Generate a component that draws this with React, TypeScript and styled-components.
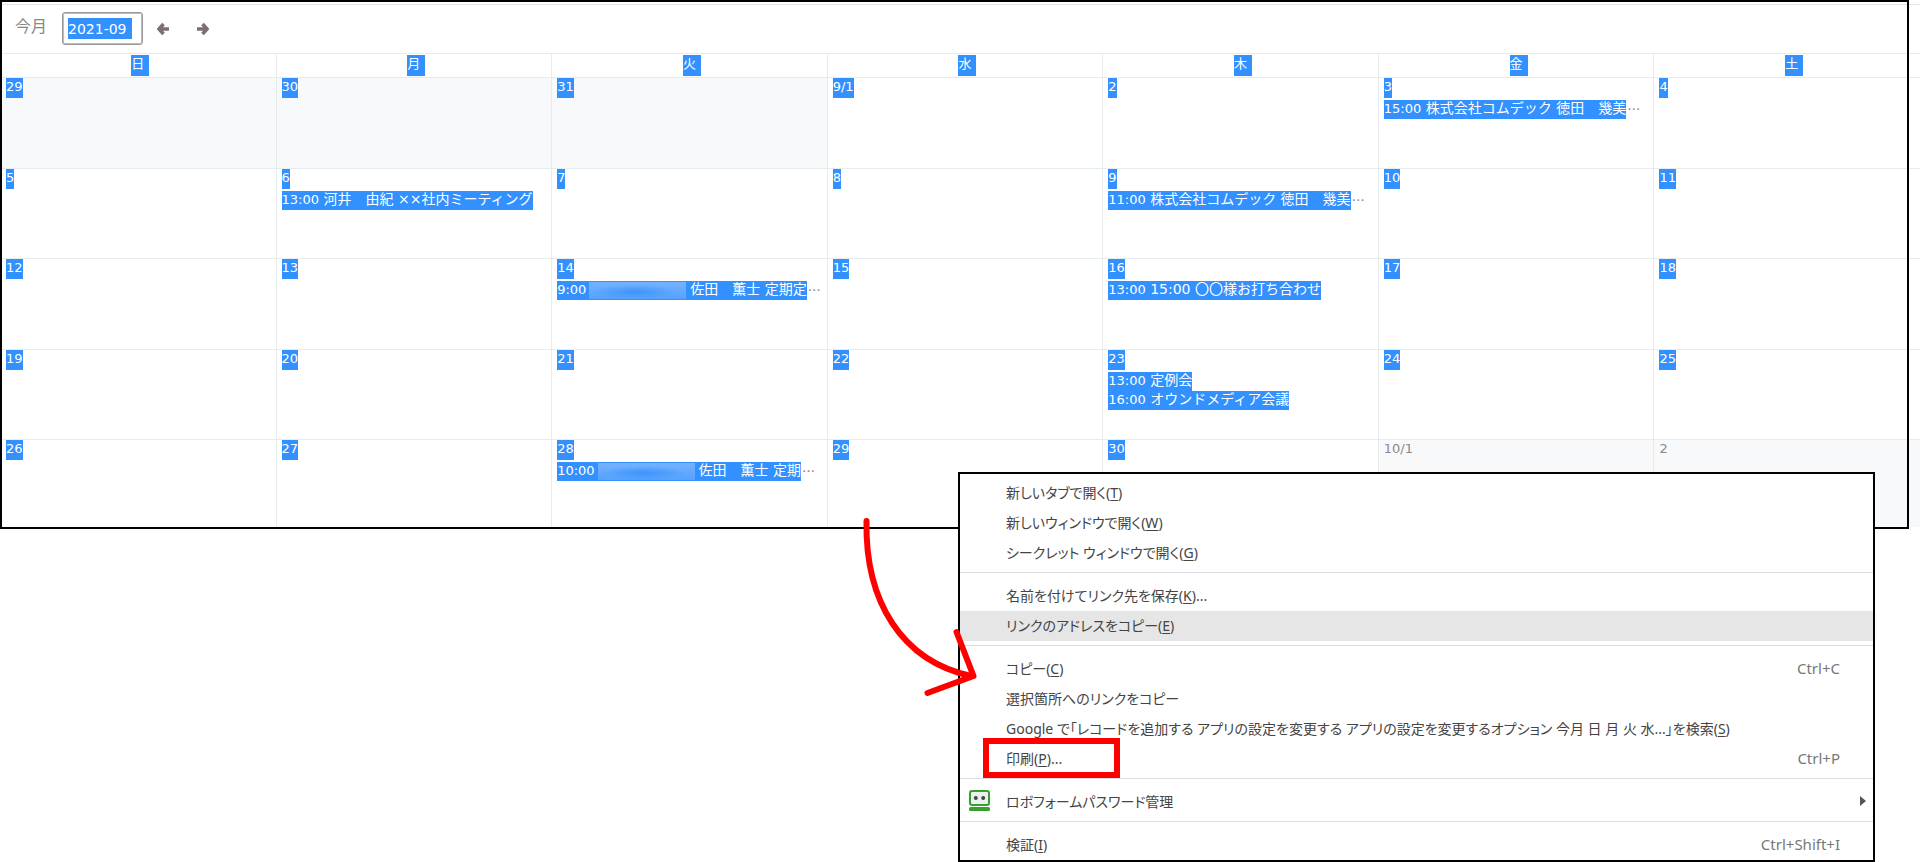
import React from 'react';
import styled, { createGlobalStyle } from 'styled-components';

const SELECT_BLUE = '#3290ff';
const LINE = '#e6ebed';

const GlobalStyle = createGlobalStyle`
  * { box-sizing: border-box; }
  body {
    margin: 0;
    background: #fff;
    color: #888;
    font-family: "DejaVu Sans", "Noto Sans CJK JP", sans-serif;
    font-size: 13px;
    overflow-x: hidden;
  }
  button, input { font: inherit; color: inherit; border: 0; background: none; padding: 0; }
`;

const Page = styled.main`
  position: relative;
  overflow-x: hidden;
  min-height: 862px;
`;

const Calendar = styled.section`
  position: relative;
  overflow: hidden;
  padding-bottom: 2px;
`;

const Frame = styled.div`
  position: absolute;
  inset: 0 11px 0 0;
  border: 2px solid #000;
  pointer-events: none;
`;

const Toolbar = styled.header`
  display: flex;
  align-items: center;
  height: 49px;
  margin-top: 4px;
  padding: 0 0 1px 15px;
  border-top: 1px solid #e4e4e4;
`;

const TodayButton = styled.button`
  font-size: 16px;
  line-height: 20px;
  margin-top: -4px;
`;

const MonthBox = styled.label`
  display: flex;
  align-items: center;
  height: 33px;
  width: 81px;
  margin: 0 14px 0 15px;
  padding: 0 5px;
  border: 1px solid #999;
  border-radius: 3px;
  box-shadow: inset 0 0 0 1px #bbb;
`;

const MonthInput = styled.input`
  width: 64px;
  height: 21px;
  background: ${SELECT_BLUE};
  color: #fff;
  font-size: 14px;
`;

const ArrowButton = styled.button`
  display: flex;
  width: 12px;
  margin-right: 28px;
`;

const Month = styled.table`
  width: calc(100% + 9px);
  table-layout: fixed;
  border-collapse: separate;
  border-spacing: 0;
`;

const DayHead = styled.th`
  height: 24px;
  padding: 0 0 0 5px;
  border-top: 1px solid ${LINE};
  font-weight: 400;
  & + & { border-left: 1px solid ${LINE}; }
`;

const Cell = styled.td<{ $outside: boolean }>`
  height: 91px;
  padding: 0 0 0 5px;
  vertical-align: top;
  border-top: 1px solid ${LINE};
  background: ${(p) => (p.$outside ? '#f7f9fb' : '#fff')};
  tr:nth-child(even) > & { height: 90px; }
  tr:last-child > & { height: 88px; }
  & + & { border-left: 1px solid ${LINE}; }
  &:first-child { padding-left: 6px; }
`;

const DayMark = styled.span`
  display: inline-block;
  vertical-align: top;
  height: 21px;
  line-height: 18px;
  padding-right: 5px;
  background: ${SELECT_BLUE};
  color: #fff;
`;

const DateMark = styled.span<{ $selected: boolean }>`
  display: block;
  width: fit-content;
  height: 20px;
  line-height: 18px;
  margin-bottom: 2px;
  background: ${(p) => (p.$selected ? SELECT_BLUE : 'transparent')};
  color: ${(p) => (p.$selected ? '#fff' : '#8a8a8a')};
`;

const EventRow = styled.div`
  display: flex;
  height: 19px;
  line-height: 17px;
  white-space: nowrap;
`;

const EventLink = styled.a`
  display: flex;
  align-items: baseline;
  white-space: pre;
  background: ${SELECT_BLUE};
  color: #fff;
  text-decoration: none;
`;

const EventTitle = styled.span`
  font-size: 14px;
`;

const Redacted = styled.span`
  align-self: center;
  width: 97px;
  height: 17px;
  margin: 0 4px 0 3px;
  background:
    radial-gradient(ellipse 42px 7px at 46px 10px, #3d94fb, transparent),
    linear-gradient(#74b2ff, #55a2fd);
`;

const Ellipsis = styled.span`
  font-family: "Noto Sans CJK JP", sans-serif;
  margin-left: 1px;
`;

const Menu = styled.nav`
  position: absolute;
  top: 472px;
  left: calc(50% - 2px);
  right: 45px;
  padding: 4px 0 0;
  border: 2px solid #000;
  background: #fff;
  color: #444;
  font-family: "Noto Sans", "Noto Sans CJK JP", sans-serif;
  font-size: 15px;
`;

const MenuItem = styled.button<{ $hover?: boolean }>`
  position: relative;
  display: flex;
  align-items: center;
  width: 100%;
  height: 30px;
  padding: 0 33px 3px 9px;
  text-align: left;
  white-space: nowrap;
  background: ${(p) => (p.$hover ? '#e6e6e6' : 'transparent')};
`;

const IconSlot = styled.span`
  display: flex;
  width: 37px;
`;

const ItemLabel = styled.span`
  flex: 1;
  font-size: 14px;
  font-feature-settings: "palt";
  u { text-underline-offset: 2px; }
`;

const Shortcut = styled.span`
  color: #777;
`;

const Submenu = styled.svg`
  position: absolute;
  right: 7px;
`;

const Separator = styled.hr`
  height: 1px;
  margin: 4px 0 8px;
  border: 0;
  background: #dcdde2;
`;

const RedBox = styled.span`
  position: absolute;
  left: 23px;
  top: -6px;
  width: 137px;
  height: 40px;
  border: 6px solid #f00;
`;

const Pointer = styled.svg`
  position: absolute;
  left: calc(50% - 100px);
  top: 510px;
  pointer-events: none;
`;

type CalEvent = { time: string; title: string; redacted?: boolean; cut?: boolean };
type Day = { label: string; outside?: boolean; plain?: boolean; events?: CalEvent[] };

const d = (label: string, ...events: CalEvent[]): Day => ({ label, events });

const weekdays = ['日', '月', '火', '水', '木', '金', '土'];

const weeks: Day[][] = [
  [
    { label: '29', outside: true },
    { label: '30', outside: true },
    { label: '31', outside: true },
    d('9/1'),
    d('2'),
    d('3', { time: '15:00', title: ' 株式会社コムデック 徳田　幾美', cut: true }),
    d('4'),
  ],
  [
    d('5'),
    d('6', { time: '13:00', title: ' 河井　由紀 ××社内ミーティング' }),
    d('7'),
    d('8'),
    d('9', { time: '11:00', title: ' 株式会社コムデック 徳田　幾美', cut: true }),
    d('10'),
    d('11'),
  ],
  [
    d('12'),
    d('13'),
    d('14', { time: '9:00', title: '佐田　薫士 定期定', redacted: true, cut: true }),
    d('15'),
    d('16', { time: '13:00', title: ' 15:00 〇〇様お打ち合わせ' }),
    d('17'),
    d('18'),
  ],
  [
    d('19'),
    d('20'),
    d('21'),
    d('22'),
    d('23', { time: '13:00', title: ' 定例会' }, { time: '16:00', title: ' オウンドメディア会議' }),
    d('24'),
    d('25'),
  ],
  [
    d('26'),
    d('27'),
    d('28', { time: '10:00', title: '佐田　薫士 定期', redacted: true, cut: true }),
    d('29'),
    d('30'),
    { label: '10/1', outside: true, plain: true },
    { label: '2', outside: true, plain: true },
  ],
];

function Arrow({ flip = false }: { flip?: boolean }) {
  return (
    <svg width="12" height="14" viewBox="0 0 12 14" aria-hidden="true">
      <path
        d={flip ? 'M5.500 2 10 7 5.500 12M0 7h9' : 'M6.500 2 2 7 6.500 12M12 7H3'}
        fill="none"
        stroke="#7b7070"
        strokeWidth="3.500"
      />
    </svg>
  );
}

function RobotIcon() {
  return (
    <svg width="21" height="21" viewBox="0 0 21 21" aria-hidden="true">
      <rect x="1" y="1" width="19" height="14" rx="2" fill="#eef0ee" stroke="#35a02f" strokeWidth="2" />
      <circle cx="6.800" cy="8" r="2" fill="#444" />
      <circle cx="14.200" cy="8" r="2" fill="#444" />
      <rect x="0" y="17" width="21" height="4" rx="1.500" fill="#35a02f" />
    </svg>
  );
}

type ItemProps = {
  text: string;
  accel?: string;
  tail?: string;
  shortcut?: string;
  hover?: boolean;
  icon?: React.ReactNode;
  children?: React.ReactNode;
};

function Item({ text, accel, tail = '', shortcut, hover, icon, children }: ItemProps) {
  return (
    <MenuItem type="button" $hover={hover}>
      <IconSlot>{icon}</IconSlot>
      <ItemLabel>
        {text}
        {accel && <>(<u>{accel}</u>){tail}</>}
      </ItemLabel>
      {shortcut && <Shortcut>{shortcut}</Shortcut>}
      {children}
    </MenuItem>
  );
}

export default function App() {
  return (
    <Page lang="ja">
      <GlobalStyle />
      <Calendar>
        <Toolbar>
          <TodayButton type="button">今月</TodayButton>
          <MonthBox>
            <MonthInput aria-label="月" defaultValue="2021-09" />
          </MonthBox>
          <ArrowButton type="button" aria-label="前月"><Arrow /></ArrowButton>
          <ArrowButton type="button" aria-label="翌月"><Arrow flip /></ArrowButton>
        </Toolbar>
        <Month>
          <thead>
            <tr>
              {weekdays.map((w) => (
                <DayHead key={w} scope="col"><DayMark>{w}</DayMark></DayHead>
              ))}
            </tr>
          </thead>
          <tbody>
            {weeks.map((week, i) => (
              <tr key={i}>
                {week.map((day) => (
                  <Cell key={day.label} $outside={!!day.outside}>
                    <DateMark $selected={!day.plain}>{day.label}</DateMark>
                    {day.events?.map((e) => (
                      <EventRow key={e.time}>
                        <EventLink href="#">
                          <span>{e.time}</span>
                          {e.redacted && <Redacted />}
                          <EventTitle>{e.title}</EventTitle>
                        </EventLink>
                        {e.cut && <Ellipsis>…</Ellipsis>}
                      </EventRow>
                    ))}
                  </Cell>
                ))}
              </tr>
            ))}
          </tbody>
        </Month>
        <Frame />
      </Calendar>

      <Menu aria-label="コンテキストメニュー">
        <Item text="新しいタブで開く" accel="T" />
        <Item text="新しいウィンドウで開く" accel="W" />
        <Item text="シークレット ウィンドウで開く" accel="G" />
        <Separator />
        <Item text="名前を付けてリンク先を保存" accel="K" tail="..." />
        <Item text="リンクのアドレスをコピー" accel="E" hover />
        <Separator />
        <Item text="コピー" accel="C" shortcut="Ctrl+C" />
        <Item text="選択箇所へのリンクをコピー" />
        <Item
          text="Google で「レコードを追加する アプリの設定を変更する アプリの設定を変更するオプション 今月 日 月 火 水...」を検索"
          accel="S"
        />
        <Item text="印刷" accel="P" tail="..." shortcut="Ctrl+P">
          <RedBox />
        </Item>
        <Separator />
        <Item text="ロボフォームパスワード管理" icon={<RobotIcon />}>
          <Submenu width="6" height="10" viewBox="0 0 6 10" aria-hidden="true">
            <path d="M0 0 6 5 0 10Z" fill="#555" />
          </Submenu>
        </Item>
        <Separator />
        <Item text="検証" accel="I" shortcut="Ctrl+Shift+I" />
      </Menu>

      <Pointer width="125" height="195" viewBox="0 0 125 195" aria-hidden="true">
        <g fill="none" stroke="#f00" strokeWidth="6" strokeLinecap="round" strokeLinejoin="round">
          <path d="M6.500 11C5 92 42 151 111 166" />
          <path d="M96.500 122 113.500 166 67.500 183" />
        </g>
      </Pointer>
    </Page>
  );
}
